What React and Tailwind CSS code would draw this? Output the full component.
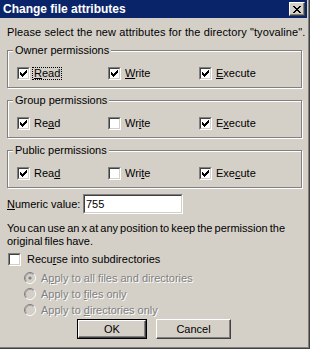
import React from "react";

function CheckMark() {
  return (
    <svg width="7" height="7" viewBox="0 0 7 7" shapeRendering="crispEdges">
      <rect x="6" y="0" width="1" height="1" fill="#000" />
      <rect x="5" y="1" width="2" height="1" fill="#000" />
      <rect x="0" y="2" width="1" height="1" fill="#000" />
      <rect x="4" y="2" width="3" height="1" fill="#000" />
      <rect x="0" y="3" width="2" height="1" fill="#000" />
      <rect x="3" y="3" width="3" height="1" fill="#000" />
      <rect x="0" y="4" width="5" height="1" fill="#000" />
      <rect x="1" y="5" width="3" height="1" fill="#000" />
      <rect x="2" y="6" width="1" height="1" fill="#000" />
    </svg>
  );
}

function CloseGlyph() {
  return (
    <svg width="8" height="7" viewBox="0 0 8 7" shapeRendering="crispEdges">
      <rect x="0" y="0" width="2" height="1" fill="#000" />
      <rect x="6" y="0" width="2" height="1" fill="#000" />
      <rect x="1" y="1" width="2" height="1" fill="#000" />
      <rect x="5" y="1" width="2" height="1" fill="#000" />
      <rect x="2" y="2" width="4" height="1" fill="#000" />
      <rect x="3" y="3" width="2" height="1" fill="#000" />
      <rect x="2" y="4" width="4" height="1" fill="#000" />
      <rect x="1" y="5" width="2" height="1" fill="#000" />
      <rect x="5" y="5" width="2" height="1" fill="#000" />
      <rect x="0" y="6" width="2" height="1" fill="#000" />
      <rect x="6" y="6" width="2" height="1" fill="#000" />
    </svg>
  );
}

function Box({ checked }) {
  return (
    <span className="flex w-[13px] h-[13px] shrink-0 border border-t-[#808080] border-l-[#808080] border-b-white border-r-white">
      <span className="flex flex-1 items-center justify-center bg-white border border-t-[#404040] border-l-[#404040] border-b-[#d4d0c8] border-r-[#d4d0c8]">
        {checked && <CheckMark />}
      </span>
    </span>
  );
}

function Radio({ selected }) {
  return (
    <svg width="12" height="12" viewBox="0 0 12 12" className="shrink-0">
      <circle cx="6" cy="6" r="4.5" fill="#d4d0c8" />
      <path d="M2.11 9.89 A5.5 5.5 0 0 1 9.89 2.11" fill="none" stroke="#808080" strokeWidth="1" />
      <path d="M9.89 2.11 A5.5 5.5 0 0 1 2.11 9.89" fill="none" stroke="#ffffff" strokeWidth="1" />
      <path d="M2.82 9.18 A4.5 4.5 0 0 1 9.18 2.82" fill="none" stroke="#a0a0a0" strokeWidth="1" />
      <path d="M9.18 2.82 A4.5 4.5 0 0 1 2.82 9.18" fill="none" stroke="#d4d0c8" strokeWidth="1" />
      {selected && <circle cx="6" cy="6" r="1.6" fill="#808080" />}
    </svg>
  );
}

function CheckRow({ items }) {
  return (
    <div className="flex h-[13px] items-center">
      {items.map((it, i) => (
        <div key={i} className="flex w-[91px] items-center gap-[4px]">
          <Box checked={it.checked} />
          <span className={it.focus ? "leading-[11px] outline-1 outline-dotted outline-black outline-offset-[0px] px-[1px] -ml-[1px]" : "leading-[13px]"}>
            {it.label}
          </span>
        </div>
      ))}
    </div>
  );
}

function Group({ title, items }) {
  return (
    <div className="relative w-[295px] border border-[#808080] shadow-[inset_1px_1px_0_#ffffff,1px_1px_0_#ffffff] pt-[16px] pb-[7px] pl-[9px]">
      <span className="absolute -top-[7px] left-[5px] bg-[#d4d0c8] px-[2px] leading-[13px]">{title}</span>
      <CheckRow items={items} />
    </div>
  );
}

function Btn({ children, def, w }) {
  const inner = (
    <span className={"flex h-full w-full items-center justify-center bg-[#d4d0c8] border border-t-white border-l-white border-b-[#404040] border-r-[#404040] shadow-[inset_-1px_-1px_0_#808080]"}>
      {children}
    </span>
  );
  return (
    <div className={(def ? "border border-black " : "") + "flex h-[20px] " + w}>
      {inner}
    </div>
  );
}

const U = ({ children }) => <span className="underline underline-offset-[1px] decoration-1">{children}</span>;

export default function App() {
  return (
    <div className="w-[310px] h-[349px] bg-[#d4d0c8] font-['Liberation_Sans',Arial,sans-serif] text-[11px] text-black">
      <div className="flex h-full flex-col border-r border-b border-r-[#404040] border-b-[#404040]">
        <div className="flex h-full flex-col border-r border-b border-r-[#808080] border-b-[#808080]">
          <div className="flex h-full flex-col pr-[1px] pb-[1px]">
            {/* Title bar */}
            <div className="flex h-[18px] shrink-0 items-center justify-between bg-[#0a246a] pl-[3px] pr-[2px]">
              <span className="font-bold text-white text-[12px] leading-[14px]">Change file attributes</span>
              <div className="flex h-[14px] w-[16px] items-center justify-center bg-[#d4d0c8] border border-t-white border-l-white border-b-[#404040] border-r-[#404040] shadow-[inset_-1px_-1px_0_#808080]">
                <CloseGlyph />
              </div>
            </div>

            {/* Body */}
            <div className="flex flex-col pl-[7px]">
              <div className="mt-[8px] leading-[13px] tracking-[0.1px] whitespace-nowrap">
                Please select the new attributes for the directory "tyovaline".
              </div>

              <div className="mt-[11px] flex flex-col gap-[12px]">
                <Group
                  title="Owner permissions"
                  items={[
                    { checked: true, focus: true, label: <><U>R</U>ead</> },
                    { checked: true, label: <><U>W</U>rite</> },
                    { checked: true, label: <><U>E</U>xecute</> },
                  ]}
                />
                <Group
                  title="Group permissions"
                  items={[
                    { checked: true, label: <>Re<U>a</U>d</> },
                    { checked: false, label: <>Wr<U>i</U>te</> },
                    { checked: true, label: <>E<U>x</U>ecute</> },
                  ]}
                />
                <Group
                  title="Public permissions"
                  items={[
                    { checked: true, label: <>Rea<U>d</U></> },
                    { checked: false, label: <>Wri<U>t</U>e</> },
                    { checked: true, label: <>Exe<U>c</U>ute</> },
                  ]}
                />
              </div>

              {/* Numeric value */}
              <div className="mt-[6px] flex items-center">
                <span className="w-[76px] leading-[13px]"><U>N</U>umeric value:</span>
                <div className="flex h-[20px] w-[100px] border border-t-[#808080] border-l-[#808080] border-b-white border-r-white">
                  <div className="flex flex-1 items-center bg-white border border-t-[#404040] border-l-[#404040] border-b-[#d4d0c8] border-r-[#d4d0c8] pl-[1px]">
                    755
                  </div>
                </div>
              </div>

              <div className="mt-[8px] leading-[13px] w-[295px] [word-spacing:-1px] whitespace-nowrap">
                You can use an x at any position to keep the permission the
                <br />
                original files have.
              </div>

              <div className="mt-[5px] flex items-center gap-[6px] pl-[1px]">
                <Box checked={false} />
                <span className="leading-[13px]">Recu<U>r</U>se into subdirectories</span>
              </div>

              <div className="mt-[4px] flex flex-col pl-[17px] text-[#808080] [text-shadow:1px_1px_0_#ffffff]">
                <div className="flex h-[16px] items-center gap-[5px]">
                  <Radio selected />
                  <span>A<U>p</U>ply to all files and directories</span>
                </div>
                <div className="flex h-[16px] items-center gap-[5px]">
                  <Radio />
                  <span>Apply to <U>f</U>iles only</span>
                </div>
                <div className="flex h-[16px] items-center gap-[5px]">
                  <Radio />
                  <span>Apply to <U>d</U>irectories only</span>
                </div>
              </div>

              <div className="mt-[1px] flex justify-center gap-[9px] pr-[6px]">
                <Btn def w="w-[70px]">OK</Btn>
                <Btn w="w-[75px]">Cancel</Btn>
              </div>
            </div>
          </div>
        </div>
      </div>
    </div>
  );
}
